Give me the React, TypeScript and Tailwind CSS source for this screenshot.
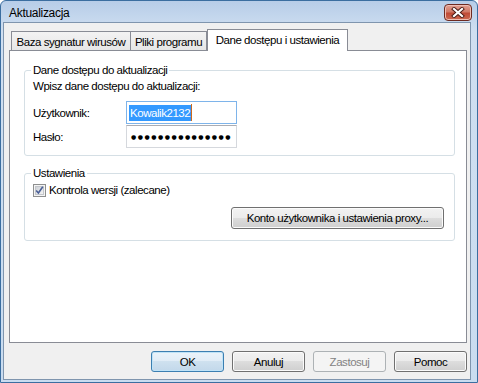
import React from 'react';

const ui = "font-['Segoe_UI','Liberation_Sans',Arial,sans-serif] text-[11.5px] leading-[14px] tracking-[-0.45px] text-black";

const WinButton = ({ label, variant = 'normal', className = '' }: { label: string; variant?: 'normal' | 'default' | 'disabled'; className?: string }) => {
  const look =
    variant === 'default'
      ? 'border-[#3c7fb1] shadow-[inset_0_0_0_1px_#bfe3f7] bg-[linear-gradient(#eaf3fa,#e0ecf6_50%,#cfe1ef_50%,#c2d8ea)] text-black'
      : variant === 'disabled'
      ? 'border-[#adb2b5] bg-[#f4f4f4] text-[#838383]'
      : 'border-[#707070] shadow-[inset_0_0_0_1px_#fbfbfb] bg-[linear-gradient(#f2f2f2,#ebebeb_50%,#dddddd_50%,#cfcfcf)] text-black';
  return (
    <button className={`flex items-center justify-center whitespace-nowrap rounded-[3px] border ${look} ${className}`}>
      {label}
    </button>
  );
};

const CloseButton = () => (
  <div className="flex h-[17px] w-[28px] items-center justify-center rounded-[4px] border border-[#6e2a20] bg-[linear-gradient(#e3a092,#d07a68_45%,#c04a36_55%,#cc6a52)] shadow-[inset_0_0_0_1px_#eebfb5]">
    <svg width="14" height="11" viewBox="0 0 14 11">
      <path d="M3 2 L11 9 M11 2 L3 9" stroke="#4a1a14" strokeWidth="4" strokeLinecap="square" />
      <path d="M3 2 L11 9 M11 2 L3 9" stroke="#ffffff" strokeWidth="2.2" strokeLinecap="square" />
    </svg>
  </div>
);

const CheckBox = () => (
  <svg width="13" height="13" viewBox="0 0 13 13" className="shrink-0">
    <defs>
      <linearGradient id="cbg" x1="0" y1="0" x2="1" y2="1">
        <stop offset="0" stopColor="#cbcfd5" />
        <stop offset="1" stopColor="#f6f6f6" />
      </linearGradient>
    </defs>
    <rect x="0.5" y="0.5" width="12" height="12" fill="#f4f4f4" stroke="#8e8f8f" />
    <rect x="2.5" y="2.5" width="8" height="8" fill="url(#cbg)" stroke="#c3c6cb" />
    <path d="M3.2 6.5 L5.4 9 L9.8 2.8" stroke="#4a5f97" strokeWidth="1.6" fill="none" />
  </svg>
);

export default function App() {
  return (
    <div className={`${ui} h-[383px] w-[478px] overflow-hidden bg-white`}>
      <div className="flex h-full w-full flex-col rounded-t-[6px] border border-[#3b6ea0] bg-[linear-gradient(#b7cde8,#cfdff1_30px,#c9dcf0)] pb-[2px] pl-[2px] pr-[6px]">
        {/* title bar */}
        <div className="flex h-[21px] shrink-0 items-center justify-between pl-[6px]">
          <span className="pt-[3px] text-[12px] tracking-[-0.3px]">Aktualizacja</span>
          <div className="mr-[-1px] mt-[2px]">
            <CloseButton />
          </div>
        </div>

        {/* client */}
        <div className="flex flex-1 flex-col border border-[#7f95ae] bg-[#f0f0f0] pl-[5px] pr-[3px] pt-[7px]">
          {/* tabs */}
          <div className="relative z-10 flex h-[20px] items-end whitespace-nowrap pl-[2px]">
            <div className="flex h-[19px] w-[120px] items-center justify-center border border-b-0 border-[#898c95] bg-[linear-gradient(#f3f3f3,#e6e6e6)] pt-[1px]">
              Baza sygnatur wirusów
            </div>
            <div className="flex h-[19px] w-[76px] items-center justify-center border border-b-0 border-l-0 border-[#898c95] bg-[linear-gradient(#f3f3f3,#e6e6e6)] pt-[1px]">
              Pliki programu
            </div>
            <div className="mb-[-1px] flex h-[22px] w-[141px] items-center justify-center border border-b-0 border-[#898c95] bg-white pb-[2px]">
              Dane dostępu i ustawienia
            </div>
          </div>

          {/* panel */}
          <div className="h-[293px] border border-[#898c95] bg-white pl-[14px] pt-[12px]">
            <fieldset className="w-[431px] rounded-[3px] border border-[#d5dfe5] pb-[7px] pl-[8px]">
              <legend className="ml-[-2px] px-[2px]">Dane dostępu do aktualizacji</legend>
              <div className="mt-[2px]">Wpisz dane dostępu do aktualizacji:</div>
              <div className="mt-[8px] flex flex-col gap-[1px]">
                <div className="flex items-center">
                  <span className="w-[93px]">Użytkownik:</span>
                  <div className="flex h-[23px] w-[111px] items-center border border-[#7eb4ea] bg-white pl-[2px]">
                    <span className="bg-[#3399ff] px-[1px] py-[1px] text-white">Kowalik2132</span>
                    <span className="h-[17px] w-[1px] bg-[#cc6a1e]" />
                  </div>
                </div>
                <div className="flex items-center">
                  <span className="w-[93px]">Hasło:</span>
                  <div className="flex h-[23px] w-[111px] items-center border border-[#d5d8dd] border-t-[#abadb3] bg-white pl-[4px]">
                    <span className="font-['DejaVu_Sans',sans-serif] text-[6px] tracking-[1.5px]">●●●●●●●●●●●●●●●</span>
                  </div>
                </div>
              </div>
            </fieldset>

            <fieldset className="mt-[10px] w-[431px] rounded-[3px] border border-[#d5dfe5] pb-[11px] pl-[8px] pr-[10px]">
              <legend className="ml-[-2px] px-[2px]">Ustawienia</legend>
              <div className="mt-[3px] flex items-center gap-[3px]">
                <CheckBox />
                <span>Kontrola wersji (zalecane)</span>
              </div>
              <div className="mt-[10px] flex justify-end">
                <WinButton label="Konto użytkownika i ustawienia proxy..." className="h-[22px] w-[213px]" />
              </div>
            </fieldset>
          </div>

          {/* dialog buttons */}
          <div className="mt-[8px] flex justify-end gap-[8px]">
            <WinButton label="OK" variant="default" className="h-[21px] w-[73px]" />
            <WinButton label="Anuluj" className="h-[21px] w-[73px]" />
            <WinButton label="Zastosuj" variant="disabled" className="h-[21px] w-[73px]" />
            <WinButton label="Pomoc" className="h-[21px] w-[73px]" />
          </div>
        </div>
      </div>
    </div>
  );
}
